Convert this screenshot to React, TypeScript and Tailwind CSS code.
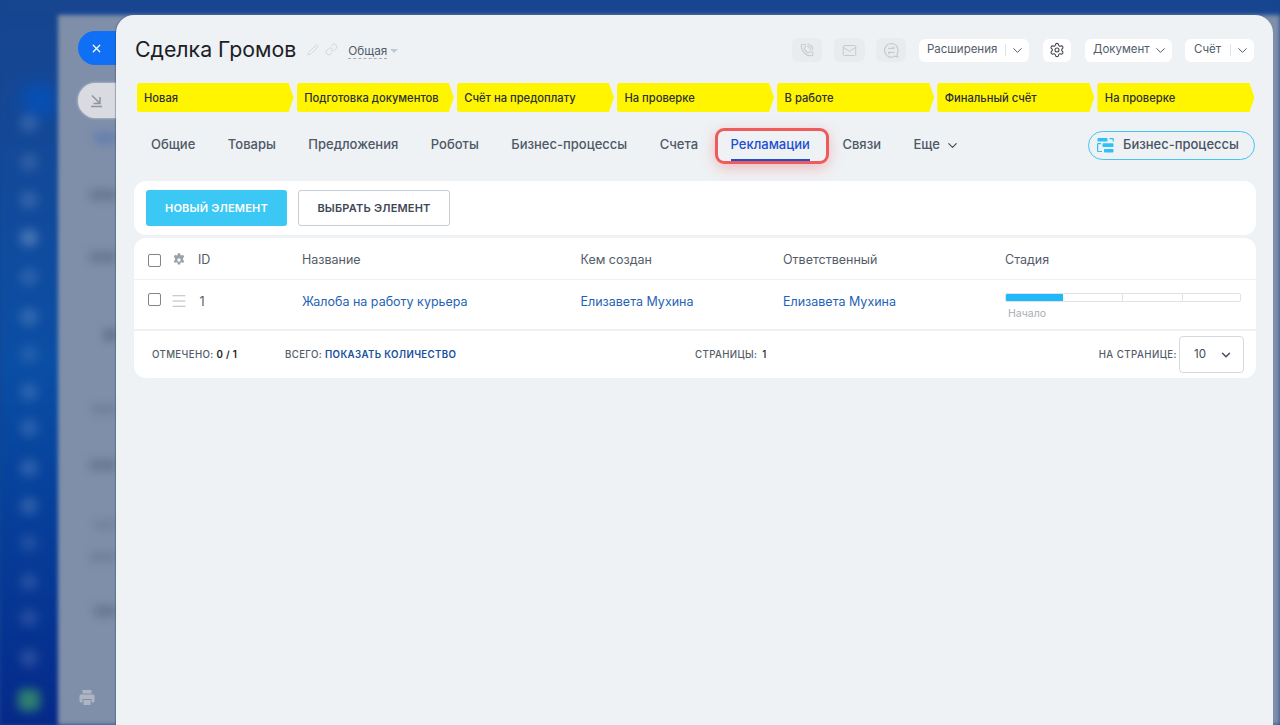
import React from "react";
import { ChevronDown, PhoneCall, Mail, Settings, Pencil, Link, X, Menu } from "lucide-react";

const stages = ["Новая", "Подготовка документов", "Счёт на предоплату", "На проверке", "В работе", "Финальный счёт", "На проверке"];
const tabs = ["Общие", "Товары", "Предложения", "Роботы", "Бизнес-процессы", "Счета"];
const sideSpots = [
  { y: 123, o: 0.14 }, { y: 162, o: 0.12 }, { y: 200, o: 0.14 }, { y: 238, o: 0.24 }, { y: 277, o: 0.12 }, { y: 317, o: 0.16 }, { y: 354, o: 0.1 },
  { y: 392, o: 0.14 }, { y: 428, o: 0.14 }, { y: 468, o: 0.16 }, { y: 506, o: 0.16 }, { y: 543, o: 0.1 }, { y: 582, o: 0.12 }, { y: 618, o: 0.12 }, { y: 658, o: 0.14 },
];
const panelSpots = [
  { y: 138, w: 22, c: "#5f7db0" }, { y: 195, w: 26, c: "#66748d" }, { y: 257, w: 26, c: "#66748d" }, { y: 335, w: 12, c: "#5d6a84" }, { y: 409, w: 24, c: "#6f7f9a" },
  { y: 465, w: 26, c: "#66748d" }, { y: 525, w: 22, c: "#72829d" }, { y: 557, w: 26, c: "#6f7f9a" }, { y: 611, w: 22, c: "#66748d" },
];

function ChatIcon() {
  return (
    <svg width="17" height="17" viewBox="0 0 17 17" fill="none" stroke="#c6cace" strokeWidth="1.2">
      <path d="M8.3 1.5a6.8 6.8 0 1 0 3.4 12.7l3 .8-.8-2.9A6.8 6.8 0 0 0 8.3 1.5Z" />
      <path d="M5 6.4h6.5M9.8 4.8l1.7 1.6M11.5 10.3H5M6.7 12 5 10.3" />
    </svg>
  );
}

function FlowIcon() {
  return (
    <svg width="17" height="16" viewBox="0 0 17 16" fill="#2fc0f5">
      <rect x="0.5" y="1" width="10" height="3.5" rx="0.8" />
      <rect x="5.5" y="6.2" width="11" height="3.8" rx="0.8" />
      <rect x="7" y="12" width="9.5" height="3.5" rx="0.8" />
      <path d="M12.5 1.6h3.2a.6.6 0 0 1 .6.6v2.3M4 6.6H1.2a.6.6 0 0 0-.6.6v6.6c0 .4.3.7.7.7H5" fill="none" stroke="#2fc0f5" strokeWidth="1.2" />
    </svg>
  );
}

function GearSolid() {
  return (
    <svg width="14" height="14" viewBox="0 0 13 13" fill="#9aa2ab">
      <path fillRule="evenodd" d="M5.4.3h2.2l.3 1.6c.3.1.6.3.9.4l1.5-.6 1.1 1.9-1.2 1c0 .3.1.6.1.9s0 .6-.1.9l1.2 1-1.1 1.9-1.5-.6c-.3.2-.6.3-.9.4l-.3 1.6H5.4l-.3-1.6c-.3-.1-.6-.3-.9-.4l-1.5.6-1.1-1.9 1.2-1c0-.3-.1-.6-.1-.9s0-.6.1-.9l-1.2-1 1.1-1.9 1.5.6c.3-.2.6-.3.9-.4L5.4.3ZM6.5 4.9a1.6 1.6 0 1 0 0 3.2 1.6 1.6 0 0 0 0-3.2Z" />
    </svg>
  );
}

function PrinterSolid() {
  return (
    <svg width="16" height="17" viewBox="0 0 16 17" fill="#aeb5c2">
      <path d="M3.5 1h9v3.5h-9z" />
      <path fillRule="evenodd" d="M2 5.5h12a1.5 1.5 0 0 1 1.5 1.5v5a1.5 1.5 0 0 1-1.5 1.5h-1.5V10h-9v3.5H2A1.5 1.5 0 0 1 .5 12V7A1.5 1.5 0 0 1 2 5.5Z" />
      <path d="M4.5 11h7v5h-7z" />
    </svg>
  );
}

export default function App() {
  return (
    <div className="relative h-[725px] w-full overflow-hidden bg-[#17468f] font-['Inter','Noto_Sans',sans-serif]">
      {/* blurred page behind the slider */}
      <div className="absolute inset-0 flex pt-[15px] blur-[2px]">
        <div className="absolute inset-0 bg-gradient-to-b from-[#17458f] via-[#0a4ea5] to-[#06298a]" />
        <div className="relative w-[58px]">
          <div className="absolute left-[22px] top-[68px] size-[34px] rounded-full bg-[#0650b6] blur-[8px]" />
          {sideSpots.map((s) => (
            <div key={s.y} className="absolute left-[20px] size-[18px] rounded-full bg-white blur-[5px]" style={{ top: s.y - 24, opacity: s.o }} />
          ))}
          <div className="absolute left-[18px] top-[674px] size-[22px] rounded-md bg-[#2f7f70] blur-[4px]" />
        </div>
        <div className="relative flex-1 bg-[#7f8fa9]">
          {panelSpots.map((s) => (
            <div key={s.y} className="absolute h-[10px] blur-[4px]" style={{ top: s.y - 20, left: 58 - s.w, width: s.w, backgroundColor: s.c }} />
          ))}
        </div>
      </div>

      <div className="absolute left-[79px] top-[689px]"><PrinterSolid /></div>

      {/* slider tabs */}
      <div className="absolute left-[78px] top-[31px] flex h-[34px] w-[42px] items-center rounded-l-full bg-[#1070f5] pl-[12px]">
        <X className="size-[13px] text-white" strokeWidth={2.2} />
      </div>
      <div className="absolute left-[78px] top-[83px] flex h-[35px] w-[42px] items-center rounded-l-full bg-[#d9dbe0] pl-[12px] shadow-[0_0_3px_rgba(255,255,255,0.6)]">
        <svg width="13" height="14" viewBox="0 0 13 14" fill="none" stroke="#8f949c" strokeWidth="1.5">
          <path d="M2 1.5 9 8.5M10 3v6.5H3.5M1 12.5h11" />
        </svg>
      </div>

      {/* slider */}
      <div className="absolute bottom-0 left-[116px] top-[15px] w-[1157px] rounded-t-[18px] bg-[#eef2f5] pl-[18px] pr-[17px] shadow-[-1px_0_1px_rgba(40,60,90,0.35)]">
        {/* header */}
        <div className="flex h-[68px] items-center justify-between pt-[2px]">
          <div className="ml-[1px] flex items-center">
            <span className="text-[21.3px] leading-none text-[#1c2025]">Сделка Громов</span>
            <Pencil className="ml-[11px] size-[12px] text-[#cfd3d8]" strokeWidth={1.6} />
            <Link className="ml-[6px] size-[13px] text-[#cfd3d8]" strokeWidth={1.6} />
            <span className="ml-[10px] mt-[4px] border-b border-dashed border-[#a8adb4] text-[11.8px] leading-[14px] text-[#525c69]">Общая</span>
            <span className="ml-[3px] mt-[2px] border-x-[4px] border-t-[4px] border-x-transparent border-t-[#c3c8ce]" />
          </div>
          <div className="flex items-center pr-[2px]">
            <div className="flex h-[24px] w-[30px] items-center justify-center rounded-md bg-[#e9ecef]"><PhoneCall className="size-[14px] text-[#c6cace]" strokeWidth={1.8} /></div>
            <div className="ml-[12px] flex h-[24px] w-[31px] items-center justify-center rounded-md bg-[#e9ecef]"><Mail className="size-[15px] text-[#c6cace]" strokeWidth={1.6} /></div>
            <div className="ml-[11px] flex h-[24px] w-[30px] items-center justify-center rounded-md bg-[#e9ecef]"><ChatIcon /></div>
            <div className="ml-[13px] flex h-[23px] w-[110px] items-center rounded-md bg-white pl-[8px] text-[11.5px] text-[#535c69]">
              <span className="w-[78px]">Расширения</span>
              <span className="h-[12px] w-px bg-[#dfe2e6]" />
              <ChevronDown className="ml-[4px] size-[15px]" strokeWidth={1.6} />
            </div>
            <div className="ml-[14px] flex h-[23px] w-[28px] items-center justify-center rounded-md bg-white">
              <Settings className="size-[16px] text-[#3f4650]" strokeWidth={1.6} />
            </div>
            <div className="ml-[14px] flex h-[23px] w-[87px] items-center rounded-md bg-white pl-[8px] text-[11.5px] text-[#535c69]">
              <span>Документ</span>
              <ChevronDown className="ml-[3px] size-[15px]" strokeWidth={1.6} />
            </div>
            <div className="ml-[13px] flex h-[23px] w-[69px] items-center rounded-md bg-white pl-[9px] text-[11.5px] text-[#535c69]">
              <span className="w-[36px]">Счёт</span>
              <span className="h-[12px] w-px bg-[#dfe2e6]" />
              <ChevronDown className="ml-[4px] size-[15px]" strokeWidth={1.6} />
            </div>
          </div>
        </div>

        {/* stages */}
        <div className="ml-[2.5px] mr-[1.5px] flex gap-[3px]">
          {stages.map((s, i) => (
            <div key={i} className="flex h-[29px] flex-1 items-center rounded-l-[3px] bg-[#fff500] pl-[7.5px] pt-[1px] text-[11.2px] font-medium text-[#2b2f33] [clip-path:polygon(0_0,calc(100%-5px)_0,100%_50%,calc(100%-5px)_100%,0_100%)]">
              {s}
            </div>
          ))}
        </div>

        {/* tabs */}
        <div className="mt-[15px] flex h-[36px] items-center justify-between">
          <div className="ml-[17px] flex items-center gap-[32.5px] text-[13px] font-medium text-[#4f5866]">
            {tabs.map((t) => <span key={t}>{t}</span>)}
            <div className="relative text-[#1c4fd1]">
              Рекламации
              <span className="absolute -bottom-[6px] left-0 right-0 h-[2px] bg-[#1c4fd1]" />
              <span className="absolute -left-[16px] -right-[19px] -top-[7px] -bottom-[9px] rounded-[9px] border-[3.5px] border-[#ef5a5a] shadow-[0_4px_14px_rgba(239,90,90,0.35)]" />
            </div>
            <span>Связи</span>
            <span className="flex items-center gap-[5px]">Еще<ChevronDown className="size-[15px] text-[#3f4650]" strokeWidth={1.8} /></span>
          </div>
          <div className="mr-[1px] flex h-[29px] w-[167px] items-center rounded-full border border-[#45c3f2] pl-[8px] text-[13px] font-medium text-[#4a5362]">
            <FlowIcon />
            <span className="ml-[9px]">Бизнес-процессы</span>
          </div>
        </div>

        {/* toolbar */}
        <div className="mt-[18px] flex h-[54px] items-center gap-[11px] rounded-xl bg-white pl-[12px]">
          <div className="flex h-[36px] w-[141px] items-center justify-center rounded-[3px] bg-[#3bc8f5] pt-[1px] text-[11px] font-semibold tracking-[0.2px] text-white">НОВЫЙ ЭЛЕМЕНТ</div>
          <div className="flex h-[36px] w-[152px] items-center justify-center rounded-[3px] border border-[#c6cdd3] pt-[1px] text-[11px] font-semibold tracking-[0.2px] text-[#3f4755]">ВЫБРАТЬ ЭЛЕМЕНТ</div>
        </div>

        {/* table */}
        <div className="mt-[3px] rounded-xl bg-white">
          <div className="grid h-[42px] grid-cols-[24px_26px_104px_278px_203px_222px_1fr] items-center border-b border-[#eef2f4] pl-[14px] pt-[3px] text-[12.5px] text-[#535c69]">
            <span className="size-[13px] rounded-[2px] border border-[#7f858c]" />
            <GearSolid />
            <span>ID</span>
            <span>Название</span>
            <span className="pl-[0.5px]">Кем создан</span>
            <span>Ответственный</span>
            <span>Стадия</span>
          </div>
          <div className="grid h-[51px] grid-cols-[24px_26px_104px_278px_203px_222px_1fr] border-b-2 border-[#eef2f4] pl-[14px] pt-[13px] text-[12.5px] text-[#535c69]">
            <span className="size-[13px] rounded-[2px] border border-[#7f858c]" />
            <Menu className="-ml-[2px] -mt-[1px] size-[18px] text-[#b4b9bf]" strokeWidth={1.3} />
            <span className="pl-[1.5px]">1</span>
            <span className="text-[#1f63b5]">Жалоба на работу курьера</span>
            <span className="pl-[0.5px] text-[#1f63b5]">Елизавета Мухина</span>
            <span className="text-[#1f63b5]">Елизавета Мухина</span>
            <div className="w-[236px]">
              <div className="flex h-[9px] overflow-hidden rounded-[2px] border border-[#dfe3e6]">
                <span className="-my-px -ml-px w-[58px] bg-[#1eb8fb]" />
                <span className="w-[60px] border-r border-[#dfe3e6]" />
                <span className="w-[60px] border-r border-[#dfe3e6]" />
              </div>
              <div className="ml-[3px] mt-[5px] text-[10.5px] leading-[13px] text-[#a8adb4]">Начало</div>
            </div>
          </div>
          <div className="flex h-[47px] items-center pl-[18px] text-[9.7px] font-medium tracking-[0.35px] text-[#535c69]">
            <span className="w-[133px] pt-[1px]">ОТМЕЧЕНО: <b className="font-semibold text-[#1c2025]">0 / 1</b></span>
            <span className="w-[410px] pt-[1px]">ВСЕГО: <span className="font-semibold text-[#174f9e]">ПОКАЗАТЬ КОЛИЧЕСТВО</span></span>
            <span className="pt-[1px]">СТРАНИЦЫ: <b className="ml-[2px] font-medium text-[#1c2025]">1</b></span>
            <span className="ml-auto pt-[1px] tracking-[0.45px]">НА СТРАНИЦЕ:</span>
            <div className="ml-[2px] mr-[12px] flex h-[37px] w-[65px] items-center rounded-[4px] border border-[#d5d9de] pl-[14px] text-[11.5px] font-normal tracking-normal text-[#3f4755]">
              10
              <ChevronDown className="ml-[13px] size-[14px]" strokeWidth={2.4} />
            </div>
          </div>
        </div>
      </div>
    </div>
  );
}
